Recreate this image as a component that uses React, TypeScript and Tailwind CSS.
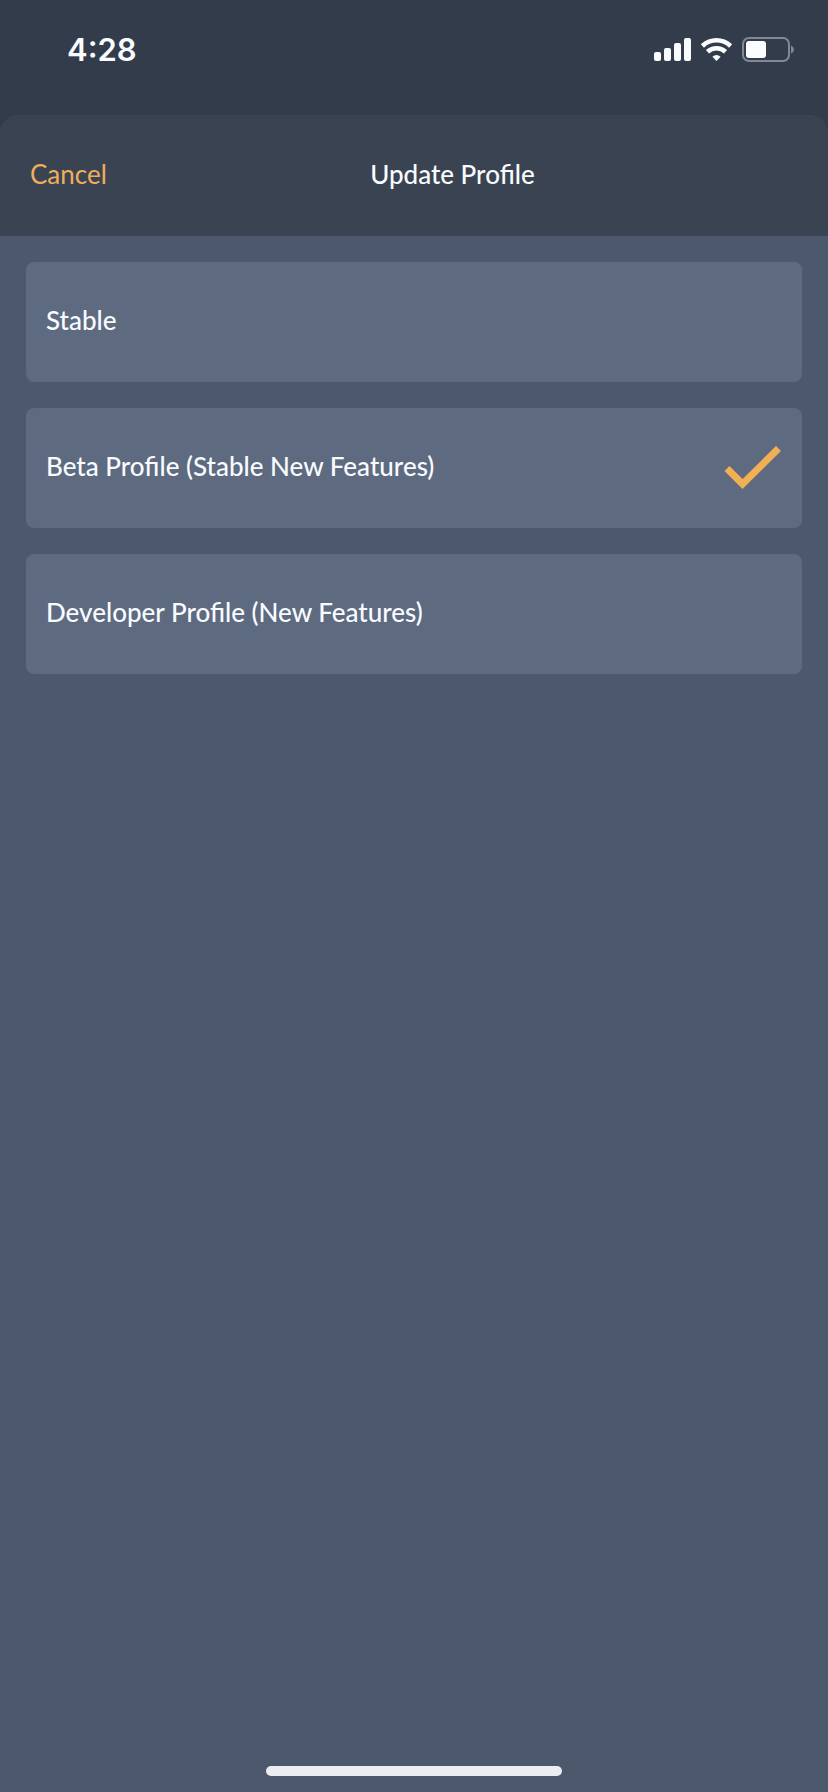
import { useState } from "react";

const profiles = [
  { id: "stable", label: "Stable" },
  { id: "beta", label: "Beta Profile (Stable New Features)" },
  { id: "developer", label: "Developer Profile (New Features)" },
];

function StatusBar() {
  return (
    <div className="flex h-[115px] items-start justify-between pt-8 pr-8 pl-[67px]">
      <span className="font-['Inter',sans-serif] text-[31px] leading-9 font-semibold">4:28</span>
      <svg className="mt-1 h-7 w-[142px]" viewBox="0 0 142 28" fill="none" aria-hidden="true">
        <g fill="#fafcff">
          <rect x="0" y="16" width="7" height="9" rx="2" />
          <rect x="10" y="12" width="7" height="13" rx="2" />
          <rect x="20" y="7" width="7" height="18" rx="2" />
          <rect x="30" y="2" width="7" height="23" rx="2" />
          <path d="M62.5 25 L58.4 20.8 Q62.5 17 66.6 20.8 Z" />
        </g>
        <g stroke="#fafcff" strokeWidth="4.6">
          <path d="M48.4 10 Q54.5 4.3 62.5 4.3 T76.6 10" />
          <path d="M53.5 15.8 Q57.5 12.2 62.5 12.2 T71.5 15.8" />
        </g>
        <rect x="89" y="2" width="46" height="23" rx="6" stroke="#828995" strokeWidth="2" />
        <rect x="92" y="5" width="20" height="17" rx="3" fill="#fafcff" />
        <path d="M137 9.5 Q140 11 140 13.5 Q140 16 137 17.5 Z" fill="#828995" />
      </svg>
    </div>
  );
}

export default function App() {
  const [selected, setSelected] = useState("beta");

  return (
    <div className="flex min-h-screen flex-col bg-[#333c4a] font-['Lato','Noto_Sans',sans-serif] text-[26px] leading-8 text-[#f8fbff]">
      <StatusBar />
      <div className="flex flex-1 flex-col overflow-hidden rounded-t-[20px] bg-[#4c586b]">
        <header className="flex h-[121px] items-center bg-[#3a4351] px-[30px] pb-1">
          <button type="button" className="text-[#efae5c]">Cancel</button>
          <h1 className="flex-1 text-center font-medium">Update Profile</h1>
        </header>
        <main className="flex-1 p-[26px]">
          <div role="radiogroup" aria-label="Update Profile" className="flex flex-col gap-[26px]">
            {profiles.map(({ id, label }) => (
              <label
                key={id}
                className="relative flex h-[120px] cursor-pointer items-center justify-between rounded-lg bg-[#5e6a80] px-5"
              >
                <input
                  type="radio"
                  name="profile"
                  value={id}
                  checked={selected === id}
                  onChange={() => setSelected(id)}
                  className="absolute inset-0 cursor-pointer appearance-none rounded-lg"
                />
                <span className="pb-1 font-medium">{label}</span>
                {selected === id && (
                  <svg className="h-11 w-[58px]" viewBox="0 0 58 44" fill="none" aria-hidden="true">
                    <path d="M3 22.5 L18.5 38 L54.5 2.5" stroke="#f2b055" strokeWidth="7" />
                  </svg>
                )}
              </label>
            ))}
          </div>
        </main>
        <footer className="flex justify-center pb-4">
          <div className="h-2.5 w-[296px] rounded-full bg-[#ecedf1]" />
        </footer>
      </div>
    </div>
  );
}
